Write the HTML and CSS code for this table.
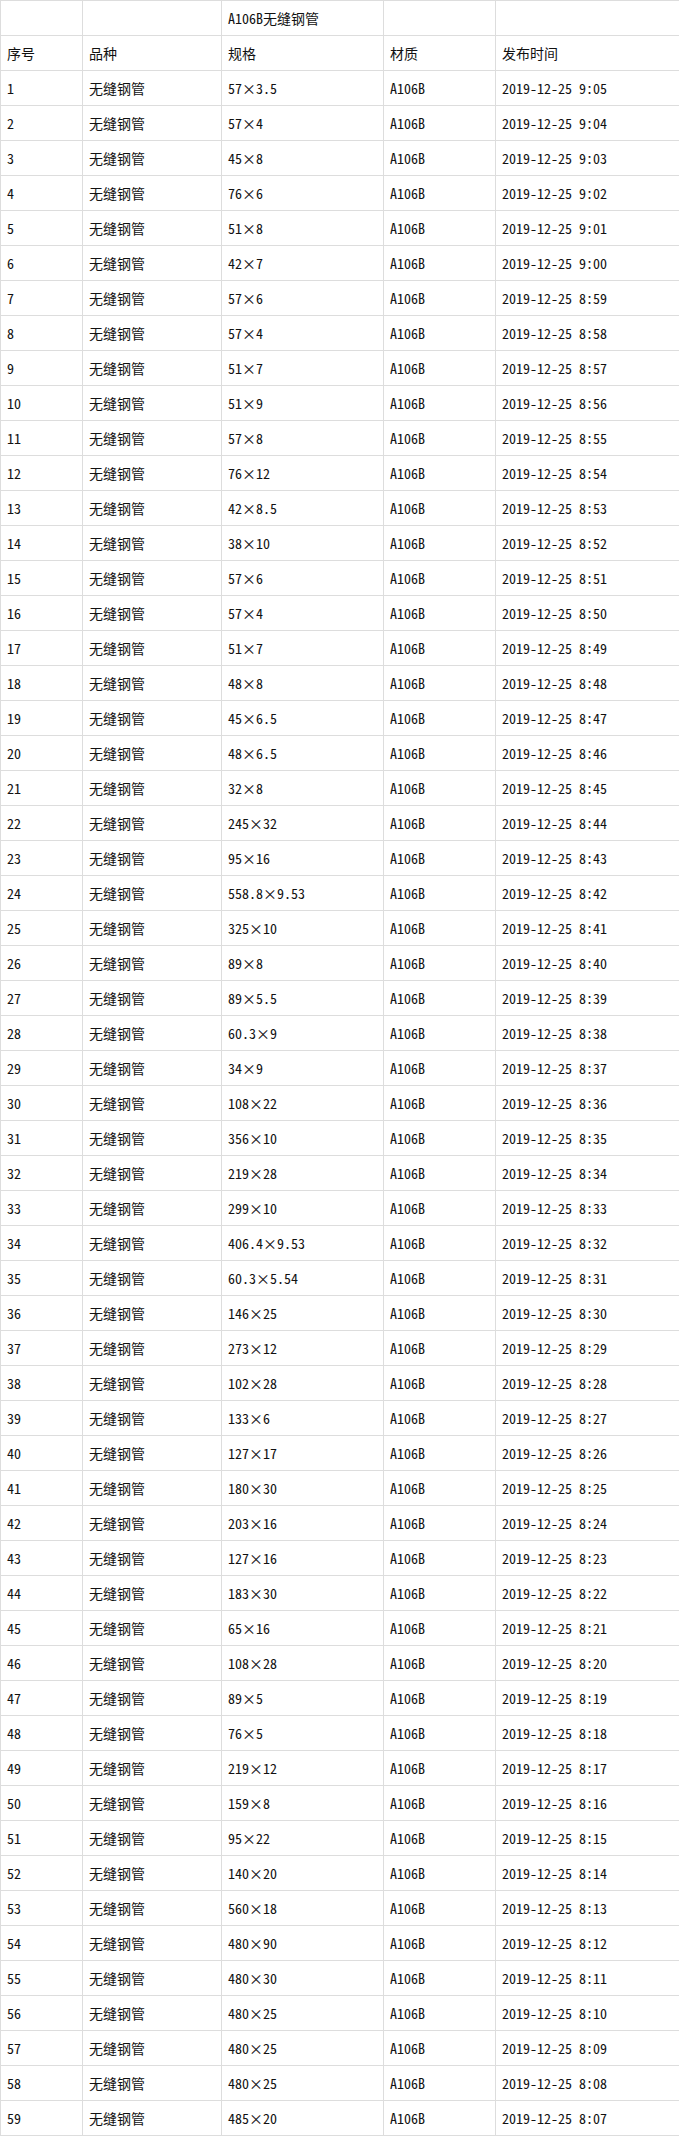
FILE: index.html
```html
<!DOCTYPE html>
<html lang="zh-CN">
<head>
<meta charset="utf-8">
<title>A106B无缝钢管</title>
<link rel="stylesheet" href="styles.css">
</head>
<body>
<table class="price-table">
<colgroup>
<col class="c1"><col class="c2"><col class="c3"><col class="c4"><col class="c5">
</colgroup>
<tbody>
<tr><td></td><td></td><td>A106B无缝钢管</td><td></td><td></td></tr>
<tr><td>序号</td><td>品种</td><td>规格</td><td>材质</td><td>发布时间</td></tr>
<tr><td>1</td><td>无缝钢管</td><td>57<span class="x">×</span>3.5</td><td>A106B</td><td>2019-12-25 9:05</td></tr>
<tr><td>2</td><td>无缝钢管</td><td>57<span class="x">×</span>4</td><td>A106B</td><td>2019-12-25 9:04</td></tr>
<tr><td>3</td><td>无缝钢管</td><td>45<span class="x">×</span>8</td><td>A106B</td><td>2019-12-25 9:03</td></tr>
<tr><td>4</td><td>无缝钢管</td><td>76<span class="x">×</span>6</td><td>A106B</td><td>2019-12-25 9:02</td></tr>
<tr><td>5</td><td>无缝钢管</td><td>51<span class="x">×</span>8</td><td>A106B</td><td>2019-12-25 9:01</td></tr>
<tr><td>6</td><td>无缝钢管</td><td>42<span class="x">×</span>7</td><td>A106B</td><td>2019-12-25 9:00</td></tr>
<tr><td>7</td><td>无缝钢管</td><td>57<span class="x">×</span>6</td><td>A106B</td><td>2019-12-25 8:59</td></tr>
<tr><td>8</td><td>无缝钢管</td><td>57<span class="x">×</span>4</td><td>A106B</td><td>2019-12-25 8:58</td></tr>
<tr><td>9</td><td>无缝钢管</td><td>51<span class="x">×</span>7</td><td>A106B</td><td>2019-12-25 8:57</td></tr>
<tr><td>10</td><td>无缝钢管</td><td>51<span class="x">×</span>9</td><td>A106B</td><td>2019-12-25 8:56</td></tr>
<tr><td>11</td><td>无缝钢管</td><td>57<span class="x">×</span>8</td><td>A106B</td><td>2019-12-25 8:55</td></tr>
<tr><td>12</td><td>无缝钢管</td><td>76<span class="x">×</span>12</td><td>A106B</td><td>2019-12-25 8:54</td></tr>
<tr><td>13</td><td>无缝钢管</td><td>42<span class="x">×</span>8.5</td><td>A106B</td><td>2019-12-25 8:53</td></tr>
<tr><td>14</td><td>无缝钢管</td><td>38<span class="x">×</span>10</td><td>A106B</td><td>2019-12-25 8:52</td></tr>
<tr><td>15</td><td>无缝钢管</td><td>57<span class="x">×</span>6</td><td>A106B</td><td>2019-12-25 8:51</td></tr>
<tr><td>16</td><td>无缝钢管</td><td>57<span class="x">×</span>4</td><td>A106B</td><td>2019-12-25 8:50</td></tr>
<tr><td>17</td><td>无缝钢管</td><td>51<span class="x">×</span>7</td><td>A106B</td><td>2019-12-25 8:49</td></tr>
<tr><td>18</td><td>无缝钢管</td><td>48<span class="x">×</span>8</td><td>A106B</td><td>2019-12-25 8:48</td></tr>
<tr><td>19</td><td>无缝钢管</td><td>45<span class="x">×</span>6.5</td><td>A106B</td><td>2019-12-25 8:47</td></tr>
<tr><td>20</td><td>无缝钢管</td><td>48<span class="x">×</span>6.5</td><td>A106B</td><td>2019-12-25 8:46</td></tr>
<tr><td>21</td><td>无缝钢管</td><td>32<span class="x">×</span>8</td><td>A106B</td><td>2019-12-25 8:45</td></tr>
<tr><td>22</td><td>无缝钢管</td><td>245<span class="x">×</span>32</td><td>A106B</td><td>2019-12-25 8:44</td></tr>
<tr><td>23</td><td>无缝钢管</td><td>95<span class="x">×</span>16</td><td>A106B</td><td>2019-12-25 8:43</td></tr>
<tr><td>24</td><td>无缝钢管</td><td>558.8<span class="x">×</span>9.53</td><td>A106B</td><td>2019-12-25 8:42</td></tr>
<tr><td>25</td><td>无缝钢管</td><td>325<span class="x">×</span>10</td><td>A106B</td><td>2019-12-25 8:41</td></tr>
<tr><td>26</td><td>无缝钢管</td><td>89<span class="x">×</span>8</td><td>A106B</td><td>2019-12-25 8:40</td></tr>
<tr><td>27</td><td>无缝钢管</td><td>89<span class="x">×</span>5.5</td><td>A106B</td><td>2019-12-25 8:39</td></tr>
<tr><td>28</td><td>无缝钢管</td><td>60.3<span class="x">×</span>9</td><td>A106B</td><td>2019-12-25 8:38</td></tr>
<tr><td>29</td><td>无缝钢管</td><td>34<span class="x">×</span>9</td><td>A106B</td><td>2019-12-25 8:37</td></tr>
<tr><td>30</td><td>无缝钢管</td><td>108<span class="x">×</span>22</td><td>A106B</td><td>2019-12-25 8:36</td></tr>
<tr><td>31</td><td>无缝钢管</td><td>356<span class="x">×</span>10</td><td>A106B</td><td>2019-12-25 8:35</td></tr>
<tr><td>32</td><td>无缝钢管</td><td>219<span class="x">×</span>28</td><td>A106B</td><td>2019-12-25 8:34</td></tr>
<tr><td>33</td><td>无缝钢管</td><td>299<span class="x">×</span>10</td><td>A106B</td><td>2019-12-25 8:33</td></tr>
<tr><td>34</td><td>无缝钢管</td><td>406.4<span class="x">×</span>9.53</td><td>A106B</td><td>2019-12-25 8:32</td></tr>
<tr><td>35</td><td>无缝钢管</td><td>60.3<span class="x">×</span>5.54</td><td>A106B</td><td>2019-12-25 8:31</td></tr>
<tr><td>36</td><td>无缝钢管</td><td>146<span class="x">×</span>25</td><td>A106B</td><td>2019-12-25 8:30</td></tr>
<tr><td>37</td><td>无缝钢管</td><td>273<span class="x">×</span>12</td><td>A106B</td><td>2019-12-25 8:29</td></tr>
<tr><td>38</td><td>无缝钢管</td><td>102<span class="x">×</span>28</td><td>A106B</td><td>2019-12-25 8:28</td></tr>
<tr><td>39</td><td>无缝钢管</td><td>133<span class="x">×</span>6</td><td>A106B</td><td>2019-12-25 8:27</td></tr>
<tr><td>40</td><td>无缝钢管</td><td>127<span class="x">×</span>17</td><td>A106B</td><td>2019-12-25 8:26</td></tr>
<tr><td>41</td><td>无缝钢管</td><td>180<span class="x">×</span>30</td><td>A106B</td><td>2019-12-25 8:25</td></tr>
<tr><td>42</td><td>无缝钢管</td><td>203<span class="x">×</span>16</td><td>A106B</td><td>2019-12-25 8:24</td></tr>
<tr><td>43</td><td>无缝钢管</td><td>127<span class="x">×</span>16</td><td>A106B</td><td>2019-12-25 8:23</td></tr>
<tr><td>44</td><td>无缝钢管</td><td>183<span class="x">×</span>30</td><td>A106B</td><td>2019-12-25 8:22</td></tr>
<tr><td>45</td><td>无缝钢管</td><td>65<span class="x">×</span>16</td><td>A106B</td><td>2019-12-25 8:21</td></tr>
<tr><td>46</td><td>无缝钢管</td><td>108<span class="x">×</span>28</td><td>A106B</td><td>2019-12-25 8:20</td></tr>
<tr><td>47</td><td>无缝钢管</td><td>89<span class="x">×</span>5</td><td>A106B</td><td>2019-12-25 8:19</td></tr>
<tr><td>48</td><td>无缝钢管</td><td>76<span class="x">×</span>5</td><td>A106B</td><td>2019-12-25 8:18</td></tr>
<tr><td>49</td><td>无缝钢管</td><td>219<span class="x">×</span>12</td><td>A106B</td><td>2019-12-25 8:17</td></tr>
<tr><td>50</td><td>无缝钢管</td><td>159<span class="x">×</span>8</td><td>A106B</td><td>2019-12-25 8:16</td></tr>
<tr><td>51</td><td>无缝钢管</td><td>95<span class="x">×</span>22</td><td>A106B</td><td>2019-12-25 8:15</td></tr>
<tr><td>52</td><td>无缝钢管</td><td>140<span class="x">×</span>20</td><td>A106B</td><td>2019-12-25 8:14</td></tr>
<tr><td>53</td><td>无缝钢管</td><td>560<span class="x">×</span>18</td><td>A106B</td><td>2019-12-25 8:13</td></tr>
<tr><td>54</td><td>无缝钢管</td><td>480<span class="x">×</span>90</td><td>A106B</td><td>2019-12-25 8:12</td></tr>
<tr><td>55</td><td>无缝钢管</td><td>480<span class="x">×</span>30</td><td>A106B</td><td>2019-12-25 8:11</td></tr>
<tr><td>56</td><td>无缝钢管</td><td>480<span class="x">×</span>25</td><td>A106B</td><td>2019-12-25 8:10</td></tr>
<tr><td>57</td><td>无缝钢管</td><td>480<span class="x">×</span>25</td><td>A106B</td><td>2019-12-25 8:09</td></tr>
<tr><td>58</td><td>无缝钢管</td><td>480<span class="x">×</span>25</td><td>A106B</td><td>2019-12-25 8:08</td></tr>
<tr><td>59</td><td>无缝钢管</td><td>485<span class="x">×</span>20</td><td>A106B</td><td>2019-12-25 8:07</td></tr>
</tbody>
</table>
</body>
</html>
```
FILE: styles.css
```css
html, body {
  margin: 0;
  padding: 0;
  background: #ffffff;
}

.price-table {
  border-collapse: collapse;
  table-layout: fixed;
  width: 679px;
  font-family: "Noto Sans CJK SC", "Noto Sans", sans-serif;
  font-size: 14px;
  color: #111111;
  font-feature-settings: "hwid" 1;
}

.c1 { width: 82px; }
.c2 { width: 139px; }
.c3 { width: 162px; }
.c4 { width: 112px; }
.c5 { width: 184px; }

.price-table td {
  border: 1px solid #dddddd;
  padding: 0 5px 0 6px;
  line-height: 34px;
  text-align: left;
  vertical-align: middle;
  white-space: nowrap;
  overflow: hidden;
}

.x {
  font-feature-settings: "fwid" 1;
  line-height: 1;
}
```
